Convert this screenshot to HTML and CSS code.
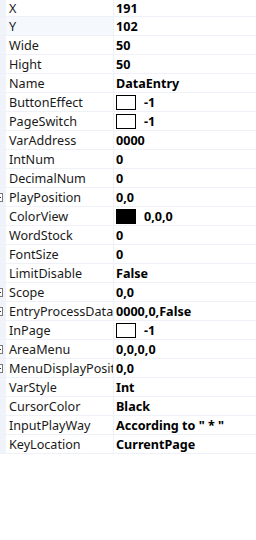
FILE: index.html
```html
<!DOCTYPE html>
<html>
	<head>
		<title>Properties</title>
		<link rel="stylesheet" href="styles.css">
	</head>
	<body>
		<div class="grid">
			<div class="row"><div class="gutter"></div><div class="name">X</div><div class="value">191</div></div>
			<div class="row selected"><div class="gutter"></div><div class="name">Y</div><div class="value">102</div></div>
			<div class="row"><div class="gutter"></div><div class="name">Wide</div><div class="value">50</div></div>
			<div class="row"><div class="gutter"></div><div class="name">Hight</div><div class="value">50</div></div>
			<div class="row"><div class="gutter"></div><div class="name">Name</div><div class="value">DataEntry</div></div>
			<div class="row"><div class="gutter"></div><div class="name">ButtonEffect</div><div class="value"><span class="swatch"></span>-1</div></div>
			<div class="row"><div class="gutter"></div><div class="name">PageSwitch</div><div class="value"><span class="swatch"></span>-1</div></div>
			<div class="row"><div class="gutter"></div><div class="name">VarAddress</div><div class="value">0000</div></div>
			<div class="row"><div class="gutter"></div><div class="name">IntNum</div><div class="value">0</div></div>
			<div class="row"><div class="gutter"></div><div class="name">DecimalNum</div><div class="value">0</div></div>
			<div class="row"><div class="gutter"><span class="expand"></span></div><div class="name">PlayPosition</div><div class="value">0,0</div></div>
			<div class="row"><div class="gutter"></div><div class="name">ColorView</div><div class="value"><span class="swatch black"></span>0,0,0</div></div>
			<div class="row"><div class="gutter"></div><div class="name">WordStock</div><div class="value">0</div></div>
			<div class="row"><div class="gutter"></div><div class="name">FontSize</div><div class="value">0</div></div>
			<div class="row"><div class="gutter"></div><div class="name">LimitDisable</div><div class="value">False</div></div>
			<div class="row"><div class="gutter"><span class="expand"></span></div><div class="name">Scope</div><div class="value">0,0</div></div>
			<div class="row"><div class="gutter"><span class="expand"></span></div><div class="name">EntryProcessData</div><div class="value">0000,0,False</div></div>
			<div class="row"><div class="gutter"></div><div class="name">InPage</div><div class="value"><span class="swatch"></span>-1</div></div>
			<div class="row"><div class="gutter"><span class="expand"></span></div><div class="name">AreaMenu</div><div class="value">0,0,0,0</div></div>
			<div class="row"><div class="gutter"><span class="expand"></span></div><div class="name">MenuDisplayPosit</div><div class="value">0,0</div></div>
			<div class="row"><div class="gutter"></div><div class="name">VarStyle</div><div class="value">Int</div></div>
			<div class="row"><div class="gutter"></div><div class="name">CursorColor</div><div class="value">Black</div></div>
			<div class="row"><div class="gutter"></div><div class="name">InputPlayWay</div><div class="value">According to " * "</div></div>
			<div class="row"><div class="gutter"></div><div class="name">KeyLocation</div><div class="value">CurrentPage</div></div>
		</div>
	</body>
</html>
```

FILE: styles.css
```css
* {
	margin: 0;
	padding: 0;
	box-sizing: border-box;
}

body {
	font-family: "Noto Sans", "Open Sans", sans-serif;
	font-size: 12.6px;
	color: #111;
	background: #fff;
	width: 256px;
	height: 540px;
	overflow: hidden;
}

.row {
	display: grid;
	grid-template-columns: 6px 108px 1fr;
	height: 19px;
	border-bottom: 1px solid #eef1f7;
}

/* top row is partly scrolled away */
.row:first-child {
	height: 17px;
}

.gutter {
	background: #f0f4fa;
	display: flex;
	align-items: center;
}

/* collapsed "+" box, mostly hidden off the left edge */
.expand {
	position: relative;
	width: 9px;
	height: 9px;
	margin-left: -6px;
	border: 1px solid #777;
	background: #fff;
}

.expand::before {
	content: "";
	position: absolute;
	left: 1px;
	right: 1px;
	top: 3px;
	height: 1px;
	background: #333;
}

.name {
	padding-left: 3px;
	display: flex;
	align-items: center;
	white-space: nowrap;
	overflow: hidden;
	border-right: 1px solid #eef1f7;
	color: #1a1a1a;
}

.row.selected .name {
	background: #f5f8fc;
}

.value {
	padding-left: 2px;
	font-weight: 700;
	color: #000;
	white-space: nowrap;
	overflow: hidden;
	display: flex;
	align-items: center;
}

.swatch {
	display: inline-block;
	width: 20px;
	height: 15px;
	border: 1px solid #000;
	background: #fff;
	margin-right: 8px;
}

.swatch.black {
	background: #000;
}
```
